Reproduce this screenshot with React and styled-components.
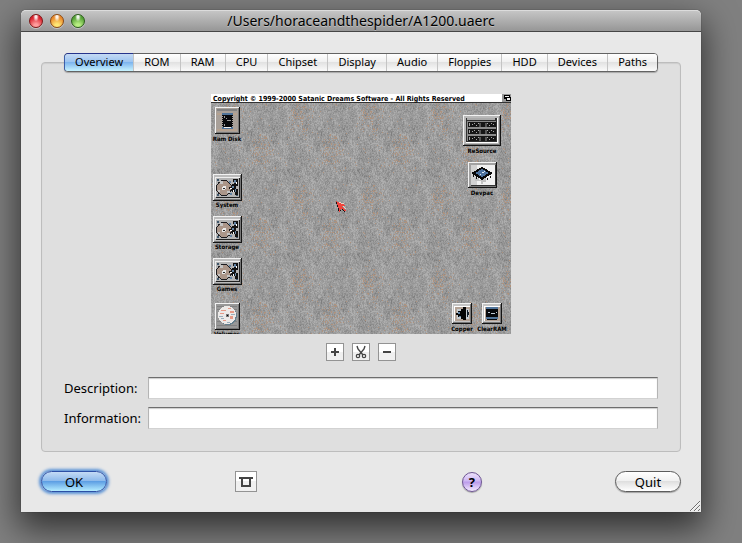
import { useState } from "react";
import styled, { createGlobalStyle, css } from "styled-components";

const TABS = [
  "Overview",
  "ROM",
  "RAM",
  "CPU",
  "Chipset",
  "Display",
  "Audio",
  "Floppies",
  "HDD",
  "Devices",
  "Paths",
];

// stone texture, one repeating tile
const TILE_W = 70;
const TILE_H = 84;
const STONE = ["#7e7e7e", "#8b8b8b", "#959595", "#9c9c9c", "#a4a4a4", "#aeaeae", "#b0927c"];

function makeStone() {
  let seed = 1200;
  const rand = () => {
    seed = (seed * 1664525 + 1013904223) % 4294967296;
    return seed / 4294967296;
  };
  const paths = STONE.map(() => "");
  const grid = Array.from({ length: 14 * 12 }, rand);
  const at = (gx, gy) => grid[(gy % 12) * 14 + (gx % 14)];
  // grain runs downwards, so every column remembers the pixel above
  const above = Array.from({ length: TILE_W }, () => 0.5);

  for (let y = 0; y < TILE_H; y++) {
    for (let x = 0; x < TILE_W; x++) {
      const gx = Math.floor(x / 5);
      const gy = Math.floor(y / 7);
      const fx = (x % 5) / 5;
      const fy = (y % 7) / 7;
      const top = at(gx, gy) * (1 - fx) + at(gx + 1, gy) * fx;
      const low = at(gx, gy + 1) * (1 - fx) + at(gx + 1, gy + 1) * fx;
      const base = top * (1 - fy) + low * fy;
      above[x] = above[x] * 0.3 + rand() * 0.7;
      const v = base * 0.3 + above[x] * 0.7;
      let shade = Math.max(0, Math.min(5, Math.floor(v * 7.4 - 0.3)));
      const warm = Math.max(
        1 - Math.hypot((x - 20) / 14, (y - 22) / 22),
        1 - Math.hypot((x - 50) / 14, (y - 58) / 22),
        0
      );
      if (rand() < 0.01 + warm * 0.22) shade = 6;
      paths[shade] += `M${x} ${y}h1v1h-1z`;
    }
  }
  return paths;
}

const stonePaths = makeStone();

function Frame({ x, y, w, h, face = "#a9a9a9" }) {
  return (
    <g>
      <rect x={x} y={y} width={w} height={h} fill="#141414" />
      <rect x={x} y={y} width={w - 1} height={h - 1} fill="#f2f2f2" />
      <rect x={x + 1} y={y + 1} width={w - 2} height={h - 2} fill="#777" />
      <rect x={x + 1} y={y + 1} width={w - 3} height={h - 3} fill={face} />
    </g>
  );
}

function DriveIcon({ x, y }) {
  return (
    <g>
      <Frame x={x} y={y} w={29} h={27} face="#bcbcbc" />
      <g transform={`translate(${x + 2} ${y + 3})`}>
        <path d="M0 0h25v20h-25z" fill="#eee" />
        <path d="M1 1h24v20h-24z" fill="#222" />
        <path d="M1 1h23v19h-23z" fill="#b4b4b4" />
        <path d="M2 2h2v2h-2zM2 17h2v2h-2zM21 17h2v2h-2z" fill="#40576b" />
        <circle cx="9" cy="11" r="8" fill="#1c1c20" />
        <circle cx="9" cy="11" r="7" fill="#ab9689" />
        <path d="M5 4h3v3h-3zM12 14h3v2h-3zM3 13h2v2h-2z" fill="#c5c5c5" />
        <circle cx="9" cy="11" r="2" fill="#e9e9e9" />
        <path d="M8 11h2v1h-2z" fill="#222" />
        <path d="M18 2h5v7h-2v3h2v6h-3v-3h-3v-3h-3v-2h3v-3h2v-2h-1z" fill="#111" />
        <path d="M19 3h2v3h-2zM17 9h2v2h-2zM20 12h1v3h-1zM14 4h2v2h-2zM15 16h2v2h-2z" fill="#6484a4" />
        <path d="M21 5h1v2h-1zM18 13h1v2h-1zM15 11h2v1h-2z" fill="#fff" />
      </g>
    </g>
  );
}

function RamIcon() {
  return (
    <g>
      <Frame x={4} y={13} w={25} h={27} face="#a8a099" />
      <path d="M6 15h20v2h-20z" fill="#818181" />
      <path d="M6 19h20v2h-20zM6 35h20v2h-20z" fill="#b5a18f" />
      <path d="M11 19h11v3h-11zM11 33h11v2h-11z" fill="#4f7399" />
      <path
        d="M12 21h9v12h-9zM11 21h1v1h-1zM11 23h1v1h-1zM11 25h1v1h-1zM11 27h1v1h-1zM11 29h1v1h-1zM11 31h1v1h-1zM21 21h1v1h-1zM21 23h1v1h-1zM21 25h1v1h-1zM21 27h1v1h-1zM21 29h1v1h-1zM21 31h1v1h-1z"
        fill="#08090c"
      />
      <path d="M13 22h1v2h-1zM15 24h1v1h-1zM16 26h4v1h-4zM13 30h1v2h-1z" fill="#9a9a9a" />
      <path d="M13 33h7v1h-7z" fill="#eee" />
    </g>
  );
}

function ResourceIcon() {
  const lines = [29, 36, 43];
  return (
    <g>
      <Frame x={252} y={21} w={38} h={31} face="#b9b9b9" />
      <path d="M255 24h32v25h-32z" fill="#fff" />
      <path d="M255 24h31v24h-31z" fill="#303030" />
      <path d="M256 27h29v20h-29z" fill="#8c8c8c" />
      <path d="M256 24h28v2h-28z" fill="#aaa" />
      {lines.map((y) => (
        <g key={y}>
          <path d={`M257 ${y - 1}h28v5h-28z`} fill="#161616" />
          <path
            d={`M258 ${y}h1v3h-1zM261 ${y + 1}h1v1h-1zM263 ${y}h1v1h-1zM265 ${y + 2}h1v1h-1zM267 ${y}h1v1h-1zM276 ${y}h1v1h-1zM278 ${y + 2}h1v1h-1zM280 ${y}h1v1h-1zM282 ${y + 1}h1v1h-1z`}
            fill="#a7a7a7"
          />
          <path d={`M268 ${y}h2v4h-2zM274 ${y}h2v4h-2z`} fill="#555" />
        </g>
      ))}
    </g>
  );
}

function DevpacIcon() {
  return (
    <g>
      <Frame x={257} y={68} w={29} h={26} face="#a2a2a2" />
      <path d="M260 71h25v21h-25z" fill="#333" />
      <path d="M260 71h24v20h-24z" fill="#f1f1f1" />
      <path d="M260 71h6v20h-6z" fill="#d2d2d2" />
      <path d="M264 84h4v2h4v-2h3v4h-3v2h-2v-3h-6z" fill="#c2c2c2" />
      <path d="M271 73l11 6-11 7-11-7z" fill="#080808" />
      <path d="M271 75l7 4-7 4-7-4z" fill="#4c719d" />
      <path d="M271 78h2v1h-2zM273 77h1v1h-1zM269 80h1v1h-1z" fill="#dce8f4" />
      <path d="M262 81h1v2h-1zM265 83h1v2h-1zM276 84h1v2h-1zM279 82h1v2h-1z" fill="#111" />
    </g>
  );
}

function VolumeIcon() {
  return (
    <g>
      <Frame x={4} y={209} w={25} h={27} face="#989898" />
      <path d="M6 212h20v1h-20zM6 215h20v1h-20zM6 227h20v1h-20zM6 231h20v1h-20z" fill="#818181" />
      <circle cx="17" cy="222" r="9" fill="#66808e" />
      <circle cx="16" cy="221" r="9" fill="#ece9e7" />
      <path
        d="M10 216h5v1h-5zM9 219h4v1h-4zM17 214h3v1h-3zM19 217h4v2h-4zM19 222h3v3h-3zM12 226h3v1h-3z"
        fill="#e59a87"
      />
      <path d="M8 222h4v1h-4zM20 220h4v1h-4zM10 224h3v1h-3zM16 228h3v1h-3z" fill="#98aebb" />
      <path d="M15 220h3v3h-3z" fill="#777" />
      <path d="M16 221h1v1h-1z" fill="#000" />
    </g>
  );
}

function CopperIcon() {
  return (
    <g>
      <Frame x={241} y={209} w={20} h={21} face="#c4c4c4" />
      <path d="M243 212h16v15h-16z" fill="#fff" />
      <path d="M244 213h15v14h-15z" fill="#b4a396" />
      <path d="M246 215h12v10h-12z" fill="#c7cdd2" />
      <path d="M255 213v13h-3v-1h-2v-2h-3v-2h-2v-2h2v-2h3v-2h2v-2z" fill="#050505" />
      <path d="M256 216h1v7h-1zM257 218h1v3h-1z" fill="#14202c" />
      <path d="M247 218h2v2h-2zM248 222h2v1h-2z" fill="#6285a8" />
    </g>
  );
}

function ClearRamIcon() {
  return (
    <g>
      <Frame x={271} y={209} w={20} h={21} face="#c4c4c4" />
      <path d="M273 212h16v15h-16z" fill="#fff" />
      <path d="M274 213h15v14h-15z" fill="#b4a396" />
      <path d="M275 213h12v2h-12zM275 223h12v2h-12z" fill="#52759a" />
      <path d="M275 215h12v8h-12zM276 225h10v1h-10z" fill="#07090d" />
      <path d="M277 218h2v1h-2zM280 219h4v1h-4zM285 218h1v1h-1z" fill="#bdc9d4" />
    </g>
  );
}

function Pointer() {
  return (
    <g>
      <path d="M125 107h1v1h2v1h2v1h3v1h1v1h-3v1h1v1h1v1h1v1h1v1h-1v1h-1v-1h-1v-1h-1v-1h-1v2h-1v1h-1v-3h-1v-3h-1v-2h-1z" fill="#f0443c" />
      <path d="M128 108h2v1h-2zM130 109h3v1h-3zM132 112h1v1h-1zM133 113h1v1h-1zM134 114h1v1h-1z" fill="#ead2c4" />
      <path d="M125 108h1v2h-1zM126 111h1v2h-1zM127 114h1v3h-1zM129 116h1v1h-1zM131 115h1v1h-1zM132 116h1v1h-1zM133 117h1v1h-1z" fill="#1a1010" />
    </g>
  );
}

function Workbench() {
  return (
    <Screen viewBox="0 0 300 240" role="img" aria-label="Workbench">
      <defs>
        <pattern id="stone" width={TILE_W} height={TILE_H} patternUnits="userSpaceOnUse">
          <rect width={TILE_W} height={TILE_H} fill="#999" />
          {stonePaths.map((d, i) => (
            <path key={STONE[i]} d={d} fill={STONE[i]} />
          ))}
        </pattern>
      </defs>
      <rect width="300" height="240" fill="url(#stone)" />
      <rect width="300" height="8" fill="#fff" />
      <rect y="8" width="300" height="1" fill="#333" />
      <path d="M291 0h9v8h-9z" fill="#989898" />
      <path d="M293 1h6v4h-6zM295 3h5v4h-5z" fill="#000" />
      <path d="M294 2h4v1h-4zM296 4h3v2h-3z" fill="#eee" />

      <RamIcon />
      <DriveIcon x={2} y={80} />
      <DriveIcon x={2} y={122} />
      <DriveIcon x={2} y={164} />
      <VolumeIcon />
      <ResourceIcon />
      <DevpacIcon />
      <CopperIcon />
      <ClearRamIcon />
      <Pointer />

      <ScreenText x="2" y="7">
        Copyright © 1999-2000 Satanic Dreams Software - All Rights Reserved
      </ScreenText>
      <IconText x="16" y="47">Ram Disk</IconText>
      <IconText x="16" y="113">System</IconText>
      <IconText x="16" y="155">Storage</IconText>
      <IconText x="16" y="197">Games</IconText>
      <IconText x="16" y="242">Volumes</IconText>
      <IconText x="271" y="59">ReSource</IconText>
      <IconText x="271" y="101">Devpac</IconText>
      <IconText x="251" y="237">Copper</IconText>
      <IconText x="281" y="237">ClearRAM</IconText>
    </Screen>
  );
}

function App() {
  const [tab, setTab] = useState("Overview");

  return (
    <>
      <GlobalStyle />
      <Window>
        <TitleBar>
          <Lights>
            <Light type="button" aria-label="Close" $rim="#7b1717" $dark="#d9212c" $light="#ff9d9d" />
            <Light type="button" aria-label="Minimize" $rim="#8a4a14" $dark="#ea8a2c" $light="#ffe775" />
            <Light type="button" aria-label="Zoom" $rim="#2c5c1c" $dark="#55a136" $light="#b9ef83" />
          </Lights>
          <Title>/Users/horaceandthespider/A1200.uaerc</Title>
        </TitleBar>

        <Content>
          <Panel>
            <TabBar role="tablist">
              {TABS.map((name) => (
                <Tab
                  key={name}
                  type="button"
                  role="tab"
                  aria-selected={tab === name}
                  $active={tab === name}
                  onClick={() => setTab(name)}
                >
                  {name}
                </Tab>
              ))}
            </TabBar>

            <Workbench />

            <Tools>
              <SquareButton type="button" aria-label="Add">
                <svg width="10" height="10" viewBox="0 0 10 10">
                  <path d="M5 1v8M1 5h8" stroke="#444" strokeWidth="2" />
                </svg>
              </SquareButton>
              <SquareButton type="button" aria-label="Cut">
                <svg width="12" height="14" viewBox="0 0 12 14" fill="none" stroke="#444">
                  <path d="M2 1l1 3 5 6M10 1L9 4l-5 6" strokeWidth="1.4" />
                  <circle cx="3" cy="11" r="1.7" strokeWidth="1.2" />
                  <circle cx="9" cy="11" r="1.7" strokeWidth="1.2" />
                </svg>
              </SquareButton>
              <SquareButton type="button" aria-label="Remove">
                <svg width="10" height="10" viewBox="0 0 10 10">
                  <path d="M1 5h8" stroke="#444" strokeWidth="2" />
                </svg>
              </SquareButton>
            </Tools>

            <Fields>
              <Label htmlFor="description">Description:</Label>
              <TextBox id="description" type="text" />
              <Label htmlFor="information">Information:</Label>
              <TextBox id="information" type="text" />
            </Fields>
          </Panel>

          <Footer>
            <PushButton type="button" $primary>
              OK
            </PushButton>
            <Spacer $grow={25} />
            <SquareButton type="button" $large aria-label="Window mode">
              <svg width="14" height="12" viewBox="0 0 14 12" fill="none" stroke="#444" strokeWidth="2">
                <path d="M0 2h14M3 2v8h8V2" />
              </svg>
            </SquareButton>
            <Spacer $grow={40} />
            <HelpButton type="button">?</HelpButton>
            <Spacer $grow={26} />
            <PushButton type="button">Quit</PushButton>
          </Footer>
        </Content>

        <Grip viewBox="0 0 12 12">
          <path d="M1 11L11 1M5 11l6-6M9 11l2-2" stroke="#707070" />
          <path d="M2 11l9-9M6 11l5-5" stroke="#fff" strokeOpacity="0.6" />
        </Grip>
      </Window>
    </>
  );
}

export default App;

const GlobalStyle = createGlobalStyle`
  * {
    box-sizing: border-box;
  }

  body {
    margin: 0;
    min-height: 100vh;
    overflow: hidden;
    background: #808080;
    color: #000;
    font-family: "Noto Sans", "Open Sans", sans-serif;
    font-size: 13px;
  }

  button,
  input {
    font: inherit;
    color: inherit;
  }

  #root {
    display: flow-root;
  }
`;

const Window = styled.main`
  position: relative;
  margin: 10px 41px 30px 21px;
  border-radius: 5px 5px 0 0;
  background: #e8e8e8;
  box-shadow:
    0 0 1px rgba(0, 0, 0, 0.7),
    0 14px 34px 3px rgba(0, 0, 0, 0.62);
`;

const TitleBar = styled.header`
  display: grid;
  grid-template-columns: 72px 1fr 72px;
  align-items: center;
  height: 22px;
  border-top: 1px solid #dcdcdc;
  border-bottom: 1px solid #454545;
  border-radius: 5px 5px 0 0;
  background: linear-gradient(#c5c5c5, #969696);
`;

const Title = styled.h1`
  margin: 0;
  font-size: 14px;
  font-weight: 400;
  line-height: 20px;
  text-align: center;
  text-shadow: 0 1px 0 rgba(255, 255, 255, 0.35);
  white-space: nowrap;
`;

const Lights = styled.div`
  display: flex;
  gap: 7px;
  padding-left: 8px;
`;

const Light = styled.button`
  width: 14px;
  height: 14px;
  padding: 0;
  border: 1px solid ${(props) => props.$rim};
  border-radius: 50%;
  background:
    radial-gradient(ellipse at 50% 14%, rgba(255, 255, 255, 0.9) 0 10%, transparent 34%),
    radial-gradient(circle at 50% 90%, ${(props) => props.$light} 15%, ${(props) => props.$dark} 70%);
  box-shadow: 0 1px 0 rgba(255, 255, 255, 0.4);
`;

const Content = styled.div`
  padding: 30px 20px 20px;
`;

const Panel = styled.section`
  display: flex;
  flex-direction: column;
  align-items: center;
  padding: 0 22px 22px;
  border: 1px solid #bdbdbd;
  border-radius: 4px;
  background: #dfdfdf;
  box-shadow: inset 0 1px 1px rgba(0, 0, 0, 0.08);
`;

const TabBar = styled.div`
  display: flex;
  align-self: stretch;
  height: 19px;
  margin-top: -10px;
  border: 1px solid #636363;
  border-radius: 4px;
  background: #fff;
  box-shadow: 0 1px 1px rgba(0, 0, 0, 0.25);
`;

const Tab = styled.button`
  flex: 1 1 auto;
  padding: 0 0 2px;
  border: 0;
  border-left: 1px solid #c4c4c4;
  background: linear-gradient(#fff 0%, #f1f1f1 45%, #e2e2e2 50%, #fbfbfb 100%);
  font-size: 11px;
  line-height: 15px;
  text-align: center;

  &:first-child {
    border-left: 0;
    border-radius: 3px 0 0 3px;
  }

  &:last-child {
    border-radius: 0 3px 3px 0;
  }

  ${(props) =>
    props.$active &&
    css`
      background: linear-gradient(#c5daf4 0%, #9dc5f1 45%, #7eb5ee 50%, #c8f4ff 100%);
      box-shadow: 0 -1px 0 #26348c, -1px 0 0 #3b5eaa;
    `}
`;

const Screen = styled.svg`
  width: 300px;
  height: 240px;
  margin-top: 22px;
  shape-rendering: crispEdges;
`;

const ScreenText = styled.text`
  font-family: "DejaVu Sans Condensed", "DejaVu Sans", sans-serif;
  font-size: 7px;
  font-weight: 700;
  fill: #000;
`;

const IconText = styled(ScreenText)`
  font-size: 6px;
  text-anchor: middle;
`;

const Tools = styled.div`
  display: flex;
  gap: 8px;
  margin-top: 9px;
`;

const SquareButton = styled.button`
  display: flex;
  align-items: center;
  justify-content: center;
  flex: none;
  width: ${(props) => (props.$large ? "22px" : "18px")};
  height: ${(props) => (props.$large ? "21px" : "18px")};
  padding: 0;
  border: 1px solid #939393;
  background: linear-gradient(#fff 50%, #f0f0f0 50%);
`;

const Fields = styled.div`
  display: grid;
  grid-template-columns: 84px 1fr;
  align-items: center;
  align-self: stretch;
  row-gap: 8px;
  margin-top: 16px;
`;

const Label = styled.label`
  line-height: 18px;
  white-space: nowrap;
`;

const TextBox = styled.input`
  width: 100%;
  height: 22px;
  padding: 0 4px;
  border: 1px solid #b4b4b4;
  border-top-color: #6e6e6e;
  border-bottom-color: #d2d2d2;
  border-radius: 0;
  outline: 0;
  background: #fff;
  box-shadow: inset 0 1px 1px rgba(0, 0, 0, 0.2);
`;

const Footer = styled.footer`
  display: flex;
  align-items: center;
  margin-top: 19px;
`;

const Spacer = styled.div`
  flex: ${(props) => props.$grow} 1 0;
`;

const PushButton = styled.button`
  width: 66px;
  height: 21px;
  padding: 0;
  border: 1px solid #5c5c5c;
  border-radius: 11px;
  background: linear-gradient(#fff 0%, #f1f1f1 45%, #dfdfdf 50%, #fff 100%);
  box-shadow: 0 1px 1px rgba(0, 0, 0, 0.3);
  line-height: 18px;

  ${(props) =>
    props.$primary &&
    css`
      border-color: #2c4fa5;
      background: linear-gradient(#c4dbf5 0%, #8fbbec 45%, #5e9fe4 50%, #b4ecff 100%);
      box-shadow: 0 0 3px 2px #5b93d6;
    `}
`;

const HelpButton = styled.button`
  width: 20px;
  height: 20px;
  padding: 0;
  border: 1px solid #6d5592;
  border-radius: 50%;
  background: linear-gradient(#ece2fb 0%, #cdb5f2 45%, #bb9bea 50%, #f4eaff 100%);
  box-shadow: 0 1px 1px rgba(0, 0, 0, 0.3);
  font-weight: 700;
  line-height: 18px;
`;

/* resize corner, sits over the content */
const Grip = styled.svg`
  position: absolute;
  right: 0;
  bottom: 0;
  width: 12px;
  height: 12px;
`;
